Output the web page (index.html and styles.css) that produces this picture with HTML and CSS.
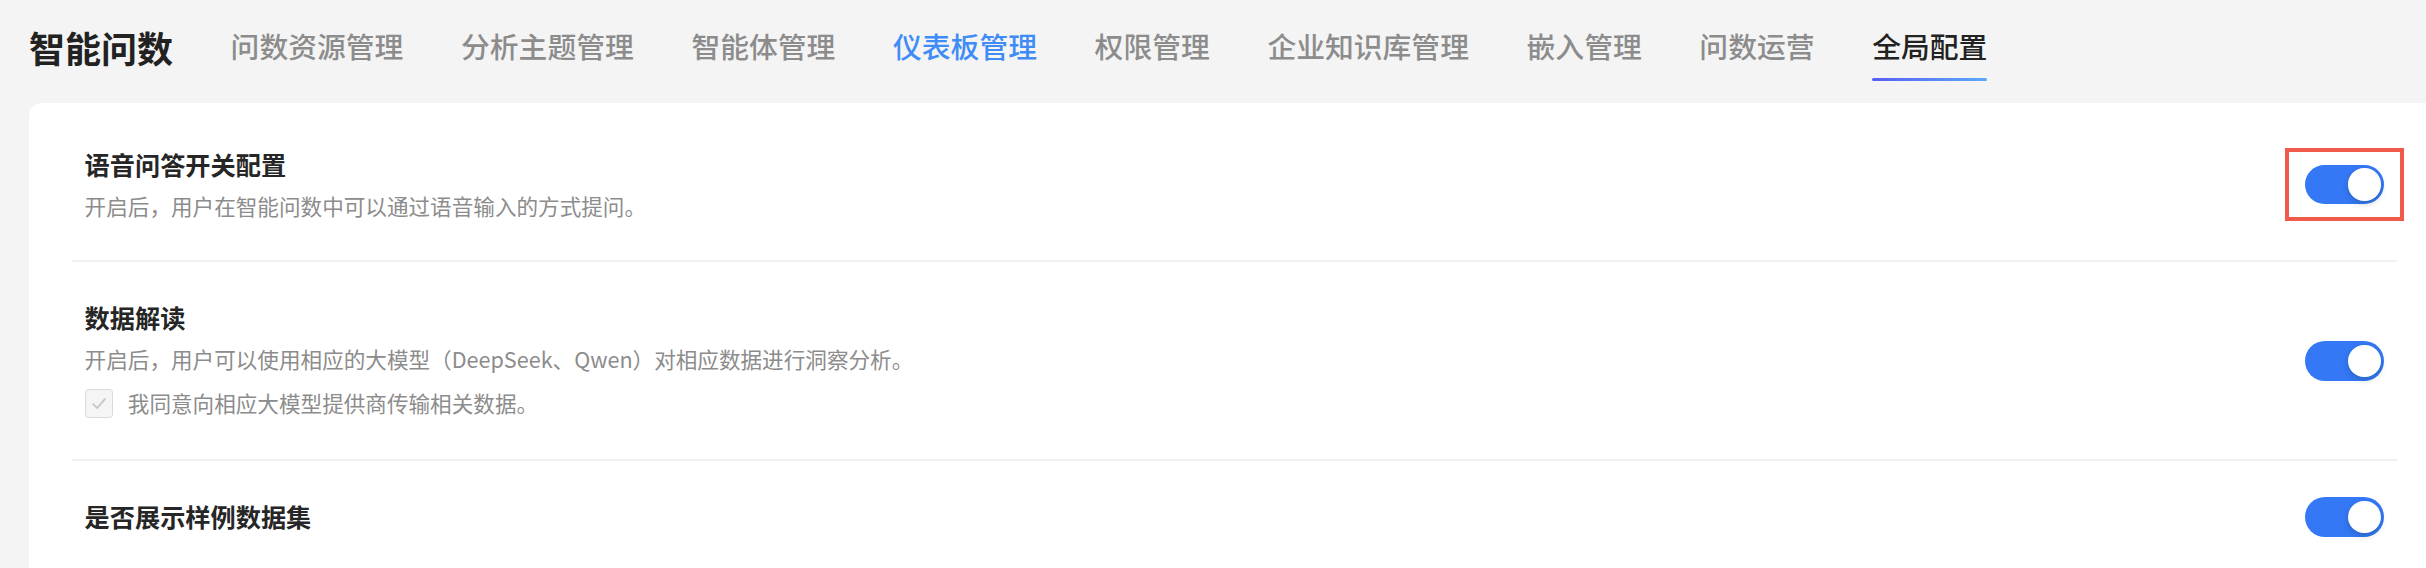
FILE: index.html
```html
<!DOCTYPE html>
<html lang="zh-CN">

<head>
  <meta charset="UTF-8">
  <meta name="viewport" content="width=device-width, initial-scale=1.0">
  <title>智能问数 - 全局配置</title>
  <link rel="stylesheet" href="styles.css">
</head>

<body>
  <header class="topbar">
    <div class="brand">智能问数</div>
    <nav class="nav">
      <a class="nav-item">问数资源管理</a>
      <a class="nav-item">分析主题管理</a>
      <a class="nav-item">智能体管理</a>
      <a class="nav-item nav-item-link">仪表板管理</a>
      <a class="nav-item">权限管理</a>
      <a class="nav-item">企业知识库管理</a>
      <a class="nav-item">嵌入管理</a>
      <a class="nav-item">问数运营</a>
      <a class="nav-item active">全局配置</a>
    </nav>
  </header>

  <main class="card">
    <div class="setting-row">
      <div class="setting-info">
        <div class="setting-title">语音问答开关配置</div>
        <div class="setting-desc">开启后，用户在智能问数中可以通过语音输入的方式提问。</div>
      </div>
      <span class="highlight">
        <span class="switch"><span class="switch-knob"></span></span>
      </span>
    </div>

    <div class="setting-row">
      <div class="setting-info">
        <div class="setting-title">数据解读</div>
        <div class="setting-desc">开启后，用户可以使用相应的大模型（DeepSeek、Qwen）对相应数据进行洞察分析。</div>
        <label class="agree">
          <span class="checkbox">
            <svg viewBox="0 0 16 16" width="20" height="20">
              <polyline points="3,8.5 6.5,12 13,4.5" fill="none" stroke="#c4c4c4" stroke-width="1.4" />
            </svg>
          </span>
          <span class="agree-text">我同意向相应大模型提供商传输相关数据。</span>
        </label>
      </div>
      <span class="switch"><span class="switch-knob"></span></span>
    </div>

    <div class="setting-row">
      <div class="setting-info">
        <div class="setting-title">是否展示样例数据集</div>
      </div>
      <span class="switch"><span class="switch-knob"></span></span>
    </div>
  </main>
</body>

</html>
```

FILE: styles.css
```css
body {
  margin: 0;
  padding: 0;
  background-color: #f4f4f4;
  font-family: 'Noto Sans CJK SC', 'Noto Sans', sans-serif;
  overflow: hidden;
}

.topbar {
  display: flex;
  align-items: flex-start;
  height: 103px;
  padding-left: 29px;
  box-sizing: border-box;
}

.brand {
  font-size: 36px;
  font-weight: 700;
  line-height: 50px;
  margin-top: 22px;
  color: #222;
}

.nav {
  display: flex;
  gap: 57.6px;
  margin-left: 57.6px;
}

.nav-item {
  font-size: 28.8px;
  font-weight: 500;
  line-height: 40px;
  padding-top: 26px;
  color: #8c8c8c;
  text-decoration: none;
  cursor: pointer;
}

.nav-item-link {
  color: #3f8cf7;
}

.nav-item.active {
  color: #222;
}

/* gradient underline under the current tab */
.nav-item.active::after {
  content: "";
  display: block;
  height: 3px;
  margin-top: 12px;
  border-radius: 2px;
  background: linear-gradient(90deg, #5a5cf7, #5caaf8);
}

.card {
  margin-left: 29px;
  min-height: 500px;
  padding-top: 6px;
  background-color: #fff;
  border-top-left-radius: 13px;
}

.setting-row {
  display: flex;
  align-items: center;
  justify-content: space-between;
  margin: 0 29px 0 43px;
  padding: 36px 12.6px;
  border-bottom: 2px solid #f0f0f0;
}

.setting-row:last-child {
  border-bottom: none;
}

.setting-title {
  font-size: 25.2px;
  font-weight: 700;
  line-height: 39.6px;
  color: #262626;
}

.setting-desc {
  margin-top: 3.6px;
  font-size: 21.6px;
  line-height: 36px;
  color: #8c8c8c;
}

.agree {
  display: flex;
  align-items: center;
  gap: 14.4px;
  margin-top: 6px;
  height: 40px;
}

.checkbox {
  display: flex;
  align-items: center;
  justify-content: center;
  width: 28.8px;
  height: 28.8px;
  box-sizing: border-box;
  border: 1.8px solid #d9d9d9;
  border-radius: 3.6px;
  background-color: #f5f5f5;
}

.agree-text {
  font-size: 21.6px;
  line-height: 36px;
  color: #8c8c8c;
}

.switch {
  display: flex;
  align-items: center;
  justify-content: flex-end;
  width: 79.2px;
  height: 39.6px;
  padding: 0 3.6px;
  box-sizing: border-box;
  border-radius: 20px;
  background-color: #3478f6;
}

.switch-knob {
  width: 32.4px;
  height: 32.4px;
  border-radius: 50%;
  background-color: #fff;
  box-shadow: 0 3px 6px rgba(0, 35, 11, 0.2);
}

/* red annotation frame drawn around the first switch */
.highlight {
  display: block;
  margin: -17px -20px;
  padding: 13px 16px;
  border: 4px solid #ef5a4b;
}
```
